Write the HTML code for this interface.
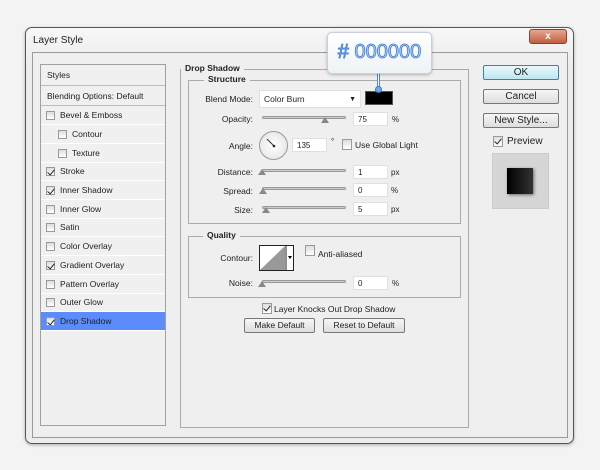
<!DOCTYPE html>
<html><head><meta charset="utf-8"><style>
*{box-sizing:border-box;margin:0;padding:0}
body{width:600px;height:470px;background:#f3f3f3;font-family:"Liberation Sans",sans-serif;font-size:9px;color:#222;position:relative;overflow:hidden}
.a{position:absolute}
.win{left:25px;top:27px;width:549px;height:417px;border:1px solid #555;border-radius:7px;background:linear-gradient(#f7f7f7,#ececec 40px);box-shadow:0 1px 3px rgba(0,0,0,.3)}
.inner{left:32px;top:52px;width:536px;height:386px;border:1px solid #999;background:#efefef}
.list{left:40px;top:64px;width:126px;height:362px;border:1px solid #a0a0a0;background:#f0f0f0}
.row{position:absolute;left:0;width:124px;height:19px;border-bottom:1px solid #fff;font-size:8.5px;line-height:18px}
.cb{position:absolute;width:9px;height:9px;border:1px solid #999;background:linear-gradient(#ddd,#fff)}
.ck::after{content:"";position:absolute;left:2px;top:0px;width:3px;height:6px;border-right:1.5px solid #223;border-bottom:1.5px solid #223;transform:rotate(40deg)}
.grp{border:1px solid #aaa}
.lbl{background:#efefef;font-weight:bold;font-size:8.5px;padding:0 4px}
.inp{background:#fff;border:1px solid #e0e0e0;height:14px;font-size:8px;padding-left:4px;line-height:13px}
.sl{height:3px;border:1px solid #999;background:#ccc;border-radius:2px}
.th{width:0;height:0;border-left:4px solid transparent;border-right:4px solid transparent;border-bottom:6px solid #888}
.btn{border:1px solid #777;border-radius:2px;background:linear-gradient(#f6f6f6,#ddd);text-align:center;font-size:10px;line-height:13px}
.r{text-align:right;font-size:8.5px}
</style></head><body>
<div class="a win"></div>
<div class="a" style="left:33px;top:35px;font-size:10px">Layer Style</div>
<div class="a" style="left:529px;top:29px;width:38px;height:15px;border-radius:3px;background:linear-gradient(#e8a590,#c06040);border:1px solid #8a4030;color:#fff;font-weight:bold;text-align:center;font-size:10px;line-height:13px">x</div>
<div class="a inner"></div>
<div class="a list">
<div class="row" style="top:0;height:21px;padding-left:6px;line-height:20px;border-bottom:1px solid #bbb">Styles</div>
<div class="row" style="top:22px;padding-left:6px;border-bottom:1px solid #bbb">Blending Options: Default</div>
<div class="row" style="top:41px"><span class="cb" style="left:5px;top:5px"></span><span style="position:absolute;left:19px">Bevel &amp; Emboss</span></div>
<div class="row" style="top:60px"><span class="cb" style="left:17px;top:5px"></span><span style="position:absolute;left:31px">Contour</span></div>
<div class="row" style="top:79px"><span class="cb" style="left:17px;top:5px"></span><span style="position:absolute;left:31px">Texture</span></div>
<div class="row" style="top:97px"><span class="cb ck" style="left:5px;top:5px"></span><span style="position:absolute;left:19px">Stroke</span></div>
<div class="row" style="top:116px"><span class="cb ck" style="left:5px;top:5px"></span><span style="position:absolute;left:19px">Inner Shadow</span></div>
<div class="row" style="top:135px"><span class="cb" style="left:5px;top:5px"></span><span style="position:absolute;left:19px">Inner Glow</span></div>
<div class="row" style="top:153px"><span class="cb" style="left:5px;top:5px"></span><span style="position:absolute;left:19px">Satin</span></div>
<div class="row" style="top:172px"><span class="cb" style="left:5px;top:5px"></span><span style="position:absolute;left:19px">Color Overlay</span></div>
<div class="row" style="top:191px"><span class="cb ck" style="left:5px;top:5px"></span><span style="position:absolute;left:19px">Gradient Overlay</span></div>
<div class="row" style="top:210px"><span class="cb" style="left:5px;top:5px"></span><span style="position:absolute;left:19px">Pattern Overlay</span></div>
<div class="row" style="top:228px"><span class="cb" style="left:5px;top:5px"></span><span style="position:absolute;left:19px">Outer Glow</span></div>
<div class="row" style="top:247px;background:#5b8cfa"><span class="cb ck" style="left:5px;top:5px"></span><span style="position:absolute;left:19px">Drop Shadow</span></div>
</div>

<div class="a grp" style="left:180px;top:69px;width:289px;height:359px"></div>
<div class="a lbl" style="left:181px;top:63px">Drop Shadow</div>
<div class="a grp" style="left:188px;top:80px;width:273px;height:144px"></div>
<div class="a lbl" style="left:204px;top:74px">Structure</div>

<div class="a r" style="left:180px;top:94px;width:73px">Blend Mode:</div>
<div class="a inp" style="left:259px;top:90px;width:102px;height:18px;line-height:17px;font-size:8.5px">Color Burn<span style="position:absolute;right:4px;top:0;font-size:7px">▼</span></div>
<div class="a" style="left:365px;top:91px;width:28px;height:14px;background:#000;border:1px solid #555"></div>
<div class="a r" style="left:180px;top:114px;width:73px">Opacity:</div>
<div class="a sl" style="left:262px;top:116px;width:84px"></div><div class="a th" style="left:321px;top:117px"></div>
<div class="a inp" style="left:353px;top:112px;width:35px">75</div><div class="a" style="left:392px;top:115px;font-size:8px">%</div>
<div class="a r" style="left:180px;top:141px;width:73px">Angle:</div>
<div class="a" style="left:259px;top:131px;width:29px;height:29px;border-radius:50%;border:1px solid #999;background:radial-gradient(#fff,#e0e0e0)"></div>
<svg class="a" style="left:259px;top:131px" width="29" height="29"><line x1="8" y1="8" x2="15" y2="15" stroke="#333"/><circle cx="15" cy="15" r="1.3" fill="#222"/></svg>
<div class="a inp" style="left:292px;top:138px;width:35px">135</div><div class="a" style="left:331px;top:137px;font-size:8px">°</div>
<div class="a cb" style="left:342px;top:139px;width:10px;height:11px"></div><div class="a" style="left:355px;top:140px;font-size:8.5px">Use Global Light</div>
<div class="a r" style="left:180px;top:167px;width:73px">Distance:</div>
<div class="a sl" style="left:262px;top:169px;width:84px"></div><div class="a th" style="left:258px;top:169px"></div>
<div class="a inp" style="left:353px;top:165px;width:35px">1</div><div class="a" style="left:391px;top:168px;font-size:8px">px</div>
<div class="a r" style="left:180px;top:186px;width:73px">Spread:</div>
<div class="a sl" style="left:262px;top:187px;width:84px"></div><div class="a th" style="left:259px;top:188px"></div>
<div class="a inp" style="left:353px;top:183px;width:35px">0</div><div class="a" style="left:391px;top:186px;font-size:8px">%</div>
<div class="a r" style="left:180px;top:205px;width:73px">Size:</div>
<div class="a sl" style="left:262px;top:206px;width:84px"></div><div class="a th" style="left:262px;top:207px"></div>
<div class="a inp" style="left:353px;top:202px;width:35px">5</div><div class="a" style="left:391px;top:205px;font-size:8px">px</div>

<div class="a grp" style="left:188px;top:236px;width:273px;height:62px"></div>
<div class="a lbl" style="left:203px;top:230px">Quality</div>
<div class="a r" style="left:180px;top:253px;width:73px">Contour:</div>
<div class="a" style="left:259px;top:245px;width:35px;height:26px;border:1px solid #222;background:#fff"></div>
<svg class="a" style="left:260px;top:246px" width="34" height="24"><polygon points="0,24 25,0 25,24" fill="#999"/><line x1="26" y1="0" x2="26" y2="24" stroke="#222"/><polygon points="28,10 32,10 30,13" fill="#000"/></svg>
<div class="a cb" style="left:305px;top:245px;width:10px;height:11px"></div><div class="a" style="left:318px;top:249px;font-size:8.5px">Anti-aliased</div>
<div class="a r" style="left:180px;top:278px;width:73px">Noise:</div>
<div class="a sl" style="left:262px;top:280px;width:84px"></div><div class="a th" style="left:258px;top:281px"></div>
<div class="a inp" style="left:353px;top:276px;width:35px">0</div><div class="a" style="left:392px;top:279px;font-size:8px">%</div>
<div class="a cb ck" style="left:262px;top:303px;width:10px;height:11px"></div><div class="a" style="left:274px;top:304px;font-size:8.5px">Layer Knocks Out Drop Shadow</div>
<div class="a btn" style="left:244px;top:318px;width:71px;height:15px;font-size:8.5px">Make Default</div>
<div class="a btn" style="left:323px;top:318px;width:82px;height:15px;font-size:8.5px">Reset to Default</div>

<div class="a btn" style="left:483px;top:65px;width:76px;height:15px;border-color:#3c7fb1;background:linear-gradient(#e8f8fc,#bfe6f0)">OK</div>
<div class="a btn" style="left:483px;top:89px;width:76px;height:15px">Cancel</div>
<div class="a btn" style="left:483px;top:113px;width:76px;height:15px">New Style...</div>
<div class="a cb ck" style="left:493px;top:136px;width:10px;height:11px"></div><div class="a" style="left:507px;top:136px;font-size:10px">Preview</div>
<div class="a" style="left:492px;top:153px;width:57px;height:56px;background:#d6d6d6;border:1px solid #ccc"></div>
<div class="a" style="left:507px;top:168px;width:26px;height:26px;background:linear-gradient(90deg,#000,#333);box-shadow:1px 1px 3px rgba(0,0,0,.5)"></div>

<div class="a" style="left:377px;top:72px;width:3px;height:17px;border:1px solid #4a8ad8;background:#fff"></div>
<div class="a" style="left:375px;top:86px;width:7px;height:7px;border-radius:50%;background:#6aaae8;border:1px solid #3a7ac8"></div>
<div class="a" style="left:327px;top:32px;width:105px;height:42px;border-radius:5px;background:linear-gradient(#fff,#eef3f6);border:1px solid #ccd;box-shadow:0 1px 3px rgba(0,0,0,.25)"></div>
<div class="a" style="left:327px;top:41px;width:105px;text-align:center;font-size:20px;color:#bcd6fb;-webkit-text-stroke:0.8px #3a78d8">#&nbsp;000000</div>
</body></html>
